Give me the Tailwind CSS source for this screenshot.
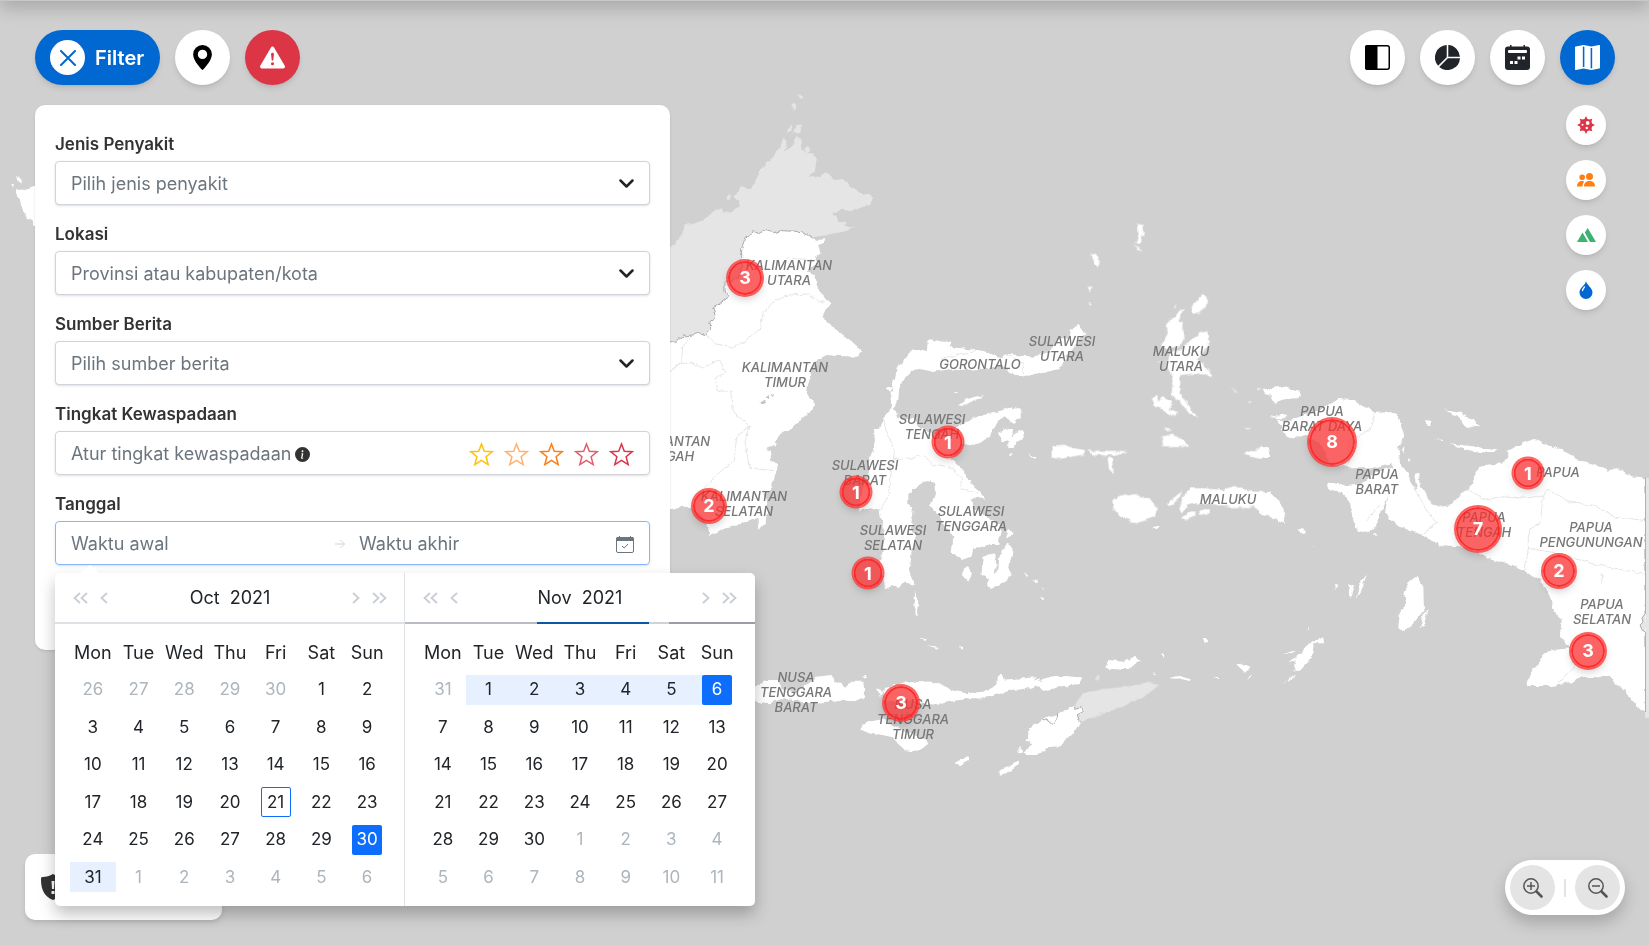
<!DOCTYPE html>
<html lang="id">
<head>
    <meta charset="UTF-8">
    <meta name="viewport" content="width=device-width, initial-scale=1.0">
    <title>Peta Kewaspadaan Penyakit</title>
    <script src="https://cdn.jsdelivr.net/npm/@tailwindcss/browser@4"></script>
</head>
<body class="relative min-h-screen overflow-hidden bg-[#d0d0d0] font-['Inter',sans-serif] text-[#212529]">

    <!-- Map -->
    <div id="map" class="absolute inset-0">
        <svg class="w-full h-full" viewBox="0 0 1649 946" preserveAspectRatio="none" aria-hidden="true">
            <defs>
                <filter id="coast" x="0" y="0" width="1649" height="946" filterUnits="userSpaceOnUse">
                    <feTurbulence type="fractalNoise" baseFrequency="0.14" numOctaves="3" seed="4" result="n"/>
                    <feDisplacementMap in="SourceGraphic" in2="n" scale="5" xChannelSelector="R" yChannelSelector="G"/>
                </filter>
            </defs>

            <path fill="#e5e5e5" d="M1645 478h4v240h-4z"/>
            <g filter="url(#coast)">
                <!-- Malaysia, Timor Leste -->
                <g fill="#e5e5e5">
                    <path transform="translate(650 80) scale(.3333)" d="M20 520L60 503L100 460L104 430L140 430L165 415L190 395L215 383L220 400L250 395L272 372L250 350L262 338L275 322L300 328L315 305L335 265L365 235L390 200L400 172L410 180L405 215L430 195L433 175L445 172L455 185L458 210L470 218L500 230L505 240L497 255L495 275L478 290L510 288L530 275L545 290L555 300L580 298L600 320L640 345L660 340L669 355L660 372L610 392L575 386L550 402L565 425L590 430L580 437L612 443L580 455L530 465L490 472L455 470L300 480L285 600L235 660L200 690L190 770L20 800Z M410 160L415 143L428 138L424 150Z M430 155L440 138L456 137L454 152L442 160Z M424 75L430 68L436 78L431 90Z M444 42L456 42L460 54L450 56Z M462 205L475 198L480 212L470 218Z M230 350L240 345L243 358L232 360Z"/>
                    <path transform="translate(1000 500) scale(.3333)" d="M225 618L245 580L310 567L380 560L440 547L478 555L430 592L395 605L385 615L340 630L280 650L240 668L215 650Z M287 540L300 527L296 545Z"/>
                </g>
                <g fill="#fff">
                    <path d="M17 188L25 190L37 186L45 230L35 225L27 217L22 207L20 200L17 197Z M11 182L14 184L13 187Z M17 177L21 179L23 184L19 182Z"/>
                    <!-- Kalimantan -->
                    <path transform="translate(650 80) scale(.3333)" d="M30 790L60 785L75 787L100 768L130 765L150 758L168 765L182 745L180 725L198 712L188 685L212 668L238 650L225 635L225 610L268 595L275 560L275 505L285 475L303 465L306 452L325 460L345 452L370 458L395 452L455 455L478 470L505 480L523 478L520 490L505 495L512 520L495 530L500 550L470 575L495 585L500 605L505 630L525 650L542 675L525 690L515 710L540 735L580 765L600 780L637 812L625 830L570 828L530 825L500 840L485 870L475 910L470 945L490 960L492 985L475 1000L460 1012L435 1040L405 1055L375 1078L380 1095L345 1108L365 1112L360 1145L382 1150L372 1200L360 1230L345 1240L355 1290L350 1325L328 1350L325 1310L290 1325L230 1345L178 1365L172 1330L130 1285L100 1280L65 1290L30 1290Z"/>
                    <!-- Sulawesi -->
                    <path transform="translate(650 80) scale(.3333)" d="M785 808L775 825L765 840L740 865L735 895L722 925L722 960L725 985L700 1015L690 1045L672 1050L675 1085L668 1110L655 1150L660 1180L640 1220L625 1295L660 1285L685 1290L692 1320L705 1350L700 1400L690 1460L700 1490L705 1525L725 1515L745 1528L765 1508L795 1515L780 1470L785 1410L800 1370L785 1350L790 1300L775 1270L775 1245L800 1220L830 1200L855 1205L858 1235L840 1275L860 1300L880 1330L910 1370L905 1420L940 1440L965 1430L970 1405L1015 1395L1045 1395L1055 1355L1045 1330L1000 1305L975 1280L960 1260L985 1250L1007 1260L980 1225L960 1210L940 1170L905 1140L925 1100L945 1090L980 1095L1020 1065L1045 1020L1065 1010L1090 1030L1112 1015L1112 990L1080 980L1045 995L1000 1005L960 1020L900 1050L850 1065L810 1045L790 1010L770 1018L745 1010L735 985L745 960L748 920L770 885L800 865L850 875L900 868L950 870L1060 860L1095 885L1140 887L1225 868L1250 830L1275 795L1307 765L1300 750L1285 735L1262 750L1260 770L1220 780L1200 815L1150 830L1100 825L1065 820L1050 835L1020 820L960 808L900 800L905 785L880 785L835 778L830 810L808 812Z M705 925L722 918L728 935L712 932Z"/>
                    <!-- Islands around Sulawesi, Nusa Tenggara -->
                    <path transform="translate(650 380) scale(.3333)" d="M998 530L1035 520L1040 560L1025 600L995 585Z M1072 488L1088 510L1078 560L1088 585L1050 615L1022 627L1010 605L1045 570L1048 530Z M940 570L955 560L965 585L955 605L940 590Z M1065 455L1080 445L1092 460L1075 472Z M1045 160L1065 145L1090 150L1085 170L1105 150L1122 155L1125 175L1100 185L1095 200L1075 205L1075 180L1055 185Z M925 75L950 58L995 46L990 55L965 65L935 78Z M795 635L805 660L800 710L793 690Z M912 34L920 32L923 40L914 42Z M1122 580L1134 586L1132 592Z M1145 598L1162 606L1158 610Z M1170 622L1182 630L1178 634Z M1170 650L1182 654L1180 663Z M812 770L830 776L826 784Z M832 796L866 800L864 806Z M930 798L942 802L936 810Z M1130 215L1160 236L1155 240Z M1090 218L1082 232L1076 228Z
                        M300 932L345 900L390 900L395 930L440 935L500 890L545 885L555 905L590 920L600 905L640 905L645 950L610 965L570 960L530 965L480 970L430 960L400 955L360 970L300 965Z M682 925L698 932L690 950Z M638 890L652 888L650 900Z M700 930L730 915L790 905L870 910L900 930L950 940L1000 935L1040 915L1040 890L1055 882L1065 905L1110 900L1130 910L1170 895L1165 915L1120 930L1085 930L1040 945L1000 955L950 955L900 965L860 975L800 965L750 965L700 960Z M1155 915L1190 890L1240 888L1300 893L1290 912L1230 918L1190 930Z M633 1045L650 1025L700 1018L760 1050L830 1080L835 1095L800 1115L765 1110L720 1070L650 1055Z M912 1150L955 1132L960 1142L930 1155Z M1048 1172L1080 1155L1110 1138L1110 1155L1070 1178L1050 1190Z"/>
                    <path transform="translate(1000 500) scale(.3333)" d="M225 618L195 630L175 645L125 657L90 685L80 720L95 735L70 755L80 765L110 765L140 745L175 742L215 705L240 670L230 645L250 640L250 622L232 628Z M50 760L65 740L65 758Z M115 550L155 535L180 528L245 533L240 550L180 560L140 572L115 560Z M0 540L110 532L95 550L60 572L0 572Z M315 507L325 480L370 485L405 467L425 485L390 498L385 508L330 503Z M480 465L494 462L490 474Z M605 418L620 416L622 426L612 430Z M712 496L745 492L748 508L735 518Z M508 535L530 526L572 538L570 543L540 536Z M638 533L658 534L656 539Z M742 535L754 524L750 534Z M880 512L890 470L935 425L970 412L972 430L942 430L935 475L900 512Z M850 462L885 452L880 460Z M868 482L888 472L886 484Z M845 548L885 524L880 534Z M922 392L934 374L930 386Z M460 82L482 76L470 88Z M895 88L914 102L910 86Z M457 516L465 520L461 525Z"/>
                    <!-- Maluku -->
                    <path transform="translate(1000 180) scale(.3333)" d="M555 385L530 400L500 435L503 460L487 490L490 505L530 505L550 480L550 430L535 425Z M575 380L610 340L622 355L618 380L600 400L580 402Z M560 490L600 460L625 450L628 480L615 510L590 540L610 555L640 588L590 580L540 585L542 640L560 670L595 715L570 703L540 665L515 645L518 590L500 560L510 520L540 510Z M455 650L470 645L475 668L492 650L515 665L510 690L535 700L520 710L490 690L465 680Z M485 770L515 762L550 780L568 800L490 802Z M337 960L360 950L410 945L450 955L470 985L465 1010L410 1030L360 1010L340 985Z M538 990L548 955L570 925L620 925L660 930L705 918L760 935L800 937L830 955L855 1000L850 1030L800 1005L760 980L710 985L640 970L570 970L545 1000Z M540 1015L580 990L585 1005L555 1020Z M595 991L627 991L625 1004L597 1004Z M500 970L545 935L540 950L510 975Z M272 218L285 222L300 248L292 258L280 240Z M412 133L427 140L431 160L418 192L406 190L416 165Z M402 195L425 215L412 210Z M266 320L278 320L272 336Z M268 366L278 370L268 373Z M733 820L805 798L808 825L780 838Z M790 635L850 622L900 638L895 655L860 655L820 670L812 648Z M808 712L860 704L850 715Z M155 800L190 797L258 812L255 822L180 837L155 832Z M265 812L385 813L340 825L280 825Z M322 832L335 835L342 882L328 868Z M688 615L714 640L706 636Z M730 744L758 744L740 748Z M492 745L515 750L500 755Z M520 378L530 378L524 385Z M476 540L486 545L480 548Z M772 624L780 622L776 630Z M745 664L753 666L748 670Z"/>
                    <!-- Papua -->
                    <path transform="translate(1260 380) scale(.3333)" d="M50 118L75 125L120 110L200 80L235 57L275 60L345 98L405 97L420 120L425 145L432 170L415 200L420 250L440 275L455 310L472 335L462 280L474 275L480 320L500 345L510 370L540 380L575 375L600 345L640 310L655 260L700 255L750 235L740 212L820 177L850 190L910 212L960 240L1045 272L1070 265L1125 293L1155 295L1155 1000L1142 990L1095 935L1045 887L990 895L965 885L940 905L900 915L870 918L800 918L815 875L850 825L880 810L930 805L910 780L900 760L905 720L880 690L875 655L840 600L795 575L740 550L690 535L620 500L540 495L480 460L430 445L400 425L375 395L385 350L355 415L345 445L292 457L270 370L245 335L205 330L200 308L235 308L255 318L290 315L320 300L340 285L375 268L400 262L395 250L340 262L265 262L210 250L185 195L140 165L85 178Z M555 88L600 95L660 135L620 145L590 110Z M495 120L510 122L512 134L500 138Z M565 190L650 200L715 212L680 218L620 210Z M526 178L550 179L548 183Z M0 200L25 205L28 230L0 238Z M5 30L60 20L120 32L118 50L80 52L45 72L30 45Z M28 108L80 104L60 115Z M470 590L490 620L492 690L460 730L430 757L415 745L420 690L440 670L430 640L450 600Z M505 690L495 735L480 745L492 700Z M265 615L282 612L275 655L268 650Z M320 583L304 635L290 655L305 605Z M0 340L30 335L68 375L72 430L30 410L0 400Z M340 458L354 468L346 470Z M445 235L452 240L446 248Z M425 205L434 200L430 220Z M112 445L135 455L128 462Z M158 498L162 500L160 505Z M225 612L235 614L228 628Z"/>
                </g>

                <!-- Borders -->
                <g fill="none" stroke="#d8d8d8" stroke-width="2">
                    <path transform="translate(650 80) scale(.3333)" d="M168 765L195 790L250 805L290 780L330 745L340 700L370 665L420 645L480 642L500 660L525 665M60 875L90 850L130 850L160 862L210 838L225 875L195 895L205 935L245 930L250 995L300 1040L285 1090L300 1165L372 1172M122 770L98 800L95 845L60 875M300 1040L262 1065L250 1140L190 1195L150 1240M410 535L500 540M700 1015L710 1060L735 1110L730 1135L720 1180L715 1250L690 1290M730 1135L785 1135L820 1125L850 1155L905 1165L938 1195L930 1225L985 1240M875 835L940 820L975 815M1065 820L1120 850L1120 880"/>
                    <path transform="translate(1260 380) scale(.3333)" d="M617 325L680 360L720 350L800 355L850 345L870 328L897 350L950 370L1000 375L1060 408L1155 422M850 345L840 430L805 450L805 505L795 575M805 505L900 520L990 550L1155 583M345 98L330 150L270 180L265 250M455 310L500 390L530 430L480 465M930 805L945 860L895 912M1024 580V610M360 375L320 420"/>
                </g>
                <g fill="none" stroke="#999" stroke-width="2.4">
                    <path transform="translate(650 80) scale(.3333)" d="M60 785L75 787L100 768L130 765L150 758L168 765L182 745L180 725L198 712L188 685L212 668L238 650L225 635L225 610L268 595L275 560L275 505L285 475L303 465L306 452L325 460L345 452L370 458L395 452L455 455L490 475"/>
                    <path transform="translate(1000 500) scale(.3333)" d="M224 618L226 628L245 620L250 635L230 645L240 668M125 657L140 660L155 672L172 655L173 640"/>
                </g>
                <path fill="#c4c4c4" d="M760 402l4-2 1 3-3 1zM766 398l3-2v4zM770 395l4-2-1 3z"/>
            </g>
            <path fill="none" stroke="#b0b0b0" d="M1645.500 478V613"/>
            <path fill="#e5e5e5" stroke="#999" stroke-width=".8" d="M1645.500 613L1642 618L1643 622L1640 625L1642 630L1645.500 632"/>
            <path fill="none" stroke="#b0b0b0" d="M1645.500 632V712"/>
        </svg>
    </div>

    <!-- Navbar bottom edge and its shadow -->
    <div class="absolute -top-14 inset-x-0 h-[57px] bg-[#c8c8c8] shadow-[0_8px_16px_rgba(0,0,0,0.18)]"></div>

    <!-- Info card -->
    <div class="absolute left-[25px] bottom-[26px] flex items-center w-[197px] h-[66px] px-4 bg-white rounded-[10px] shadow-md">
        <svg class="w-6 h-[26px]" viewBox="0 0 24 26" fill="#333" aria-hidden="true">
            <path d="M12 0C9 2 5 3 1.500 3C0 3 0 4 0 6C0 16 4 23 12 26C20 23 24 16 24 6C24 4 24 3 22.500 3C19 3 15 2 12 0Z"/>
            <path fill="#fff" d="M10.500 7h3l-.5 8h-2zM10.500 17h3v3h-3z"/>
        </svg>
    </div>

    <!-- Top buttons -->
    <header class="relative flex justify-between pl-[35px] pr-[34px] pt-[30px]">
        <div class="flex gap-[15px]">
            <button type="button" class="flex items-center gap-[10px] h-[55px] pl-[15px] pr-4 rounded-full bg-[#0068d0] text-white text-xl font-semibold shadow-md">
                <span class="flex items-center justify-center size-[35px] rounded-full bg-white">
                    <svg class="size-4" viewBox="0 0 16 16" fill="none" stroke="#0068d0" stroke-width="2" stroke-linecap="round"><path d="M1 1L15 15M15 1L1 15"/></svg>
                </span>
                Filter
            </button>
            <button type="button" aria-label="Lokasi" class="flex items-center justify-center size-[55px] rounded-full bg-white text-black shadow-md">
                <svg class="size-[25px]" viewBox="0 0 16 16" fill="currentColor"><path d="M8 16s6-5.686 6-10A6 6 0 0 0 2 6c0 4.314 6 10 6 10m0-7a3 3 0 1 1 0-6 3 3 0 0 1 0 6"/></svg>
            </button>
            <button type="button" aria-label="Peringatan" class="flex items-center justify-center size-[55px] rounded-full bg-[#dc3545] text-white shadow-md">
                <svg class="size-[25px]" viewBox="0 0 16 16" fill="currentColor"><path d="M8.982 1.566a1.13 1.13 0 0 0-1.96 0L.165 13.233c-.457.778.091 1.767.98 1.767h13.713c.889 0 1.438-.99.98-1.767zM8 5c.535 0 .954.462.9.995l-.35 3.507a.552.552 0 0 1-1.1 0L7.100 5.995A.905.905 0 0 1 8 5m.002 6a1 1 0 1 1 0 2 1 1 0 0 1 0-2"/></svg>
            </button>
        </div>
        <div class="flex gap-[15px]">
            <button type="button" aria-label="Panel" class="flex items-center justify-center size-[55px] rounded-full bg-white text-black shadow-md">
                <svg class="size-[25px]" viewBox="0 0 25 25"><rect x=".75" y=".75" width="23.500" height="23.500" rx="2" fill="none" stroke="currentColor" stroke-width="1.500"/><path fill="currentColor" d="M2 0h10.500v25H2a2 2 0 0 1-2-2V2a2 2 0 0 1 2-2z"/></svg>
            </button>
            <button type="button" aria-label="Statistik" class="flex items-center justify-center size-[55px] rounded-full bg-white text-[#212529] shadow-md">
                <svg class="size-[25px]" viewBox="0 0 16 16" fill="currentColor"><path d="M15.985 8.500H8.207l-5.500 5.500a8 8 0 0 0 13.277-5.500zM2 13.292A8 8 0 0 1 7.500.015v7.778zM8.500.015V7.500h7.485A8 8 0 0 0 8.500.015"/></svg>
            </button>
            <button type="button" aria-label="Kalender" class="flex items-center justify-center size-[55px] rounded-full bg-white text-[#212529] shadow-md">
                <svg class="size-[25px]" viewBox="0 0 25 25"><rect y="1.500" width="25" height="23.500" rx="3" fill="currentColor"/><path fill="currentColor" d="M5 0h1.500v3H5zM18.500 0H20v3h-1.500z"/><path fill="#fff" d="M4 5h17a1 1 0 0 1 1 1v1a1 1 0 0 1-1 1H4a1 1 0 0 1-1-1V6a1 1 0 0 1 1-1zM12.500 11.500h3v3h-3zM17 11.500h3v3h-3zM5 16h3v3H5zM9.500 16h3v3h-3z"/></svg>
            </button>
            <button type="button" aria-label="Peta" class="flex items-center justify-center size-[55px] rounded-full bg-[#0068d0] text-white shadow-md">
                <svg class="size-[25px]" viewBox="0 0 16 16" fill="currentColor" fill-rule="evenodd"><path d="M16 .5a.5.5 0 0 0-.598-.49L10.500.99 5.598.01a.5.5 0 0 0-.196 0l-5 1A.5.5 0 0 0 0 1.500v14a.5.5 0 0 0 .598.49l4.902-.98 4.902.98a.5.5 0 0 0 .196 0l5-1A.5.5 0 0 0 16 14.500zM5 14.090V1.110l.5-.1.5.1v12.980l-.402-.08a.5.5 0 0 0-.196 0zm5 .8V1.910l.402.08a.5.5 0 0 0 .196 0L11 1.910v12.980l-.5.1z"/></svg>
            </button>
        </div>
    </header>

    <main class="relative flex items-start justify-between px-[35px] pt-5">
        <!-- Filter panel -->
        <form class="flex flex-col gap-[17px] w-[635px] px-5 pt-[27px] pb-[85px] bg-white rounded-[10px] shadow-sm">
            <div>
                <label for="jenis" class="block mb-[5px] text-[17px] leading-6 font-semibold text-[#333]">Jenis Penyakit</label>
                <div class="relative">
                    <select id="jenis" class="appearance-none block w-full h-11 px-[15px] pt-0.5 rounded border border-[#ced4da] bg-white text-lg text-[#6c757d] shadow-sm">
                        <option>Pilih jenis penyakit</option>
                    </select>
                    <svg class="absolute right-4 top-[18px] w-[15px] h-[9px] pointer-events-none" viewBox="0 0 15 9" fill="none" stroke="#212529" stroke-width="2.500" stroke-linecap="round" stroke-linejoin="round"><path d="M1.500 1.500L7.500 7.500L13.500 1.500"/></svg>
                </div>
            </div>
            <div>
                <label for="lokasi" class="block mb-[5px] text-[17px] leading-6 font-semibold text-[#333]">Lokasi</label>
                <div class="relative">
                    <select id="lokasi" class="appearance-none block w-full h-11 px-[15px] pt-0.5 rounded border border-[#ced4da] bg-white text-lg text-[#6c757d] shadow-sm">
                        <option>Provinsi atau kabupaten/kota</option>
                    </select>
                    <svg class="absolute right-4 top-[18px] w-[15px] h-[9px] pointer-events-none" viewBox="0 0 15 9" fill="none" stroke="#212529" stroke-width="2.500" stroke-linecap="round" stroke-linejoin="round"><path d="M1.500 1.500L7.500 7.500L13.500 1.500"/></svg>
                </div>
            </div>
            <div>
                <label for="sumber" class="block mb-[5px] text-[17px] leading-6 font-semibold text-[#333]">Sumber Berita</label>
                <div class="relative">
                    <select id="sumber" class="appearance-none block w-full h-11 px-[15px] pt-0.5 rounded border border-[#ced4da] bg-white text-lg text-[#6c757d] shadow-sm">
                        <option>Pilih sumber berita</option>
                    </select>
                    <svg class="absolute right-4 top-[18px] w-[15px] h-[9px] pointer-events-none" viewBox="0 0 15 9" fill="none" stroke="#212529" stroke-width="2.500" stroke-linecap="round" stroke-linejoin="round"><path d="M1.500 1.500L7.500 7.500L13.500 1.500"/></svg>
                </div>
            </div>
            <div role="group" aria-labelledby="tingkat">
                <div id="tingkat" class="mb-[5px] text-[17px] leading-6 font-semibold text-[#333]">Tingkat Kewaspadaan</div>
                <div class="flex items-center h-11 px-[15px] pt-0.5 rounded border border-[#ced4da] text-lg text-[#6c757d] shadow-sm">
                    Atur tingkat kewaspadaan
                    <svg class="ml-1 size-[15px]" viewBox="0 0 16 16" fill="#333" aria-hidden="true"><path d="M8 16A8 8 0 1 0 8 0a8 8 0 0 0 0 16m.93-9.412-1 4.705c-.07.34.029.533.304.533.194 0 .487-.07.686-.246l-.088.416c-.287.346-.92.598-1.465.598-.703 0-1.002-.422-.808-1.319l.738-3.468c.064-.293.006-.399-.287-.47l-.451-.081.082-.381 2.290-.287zM8 5.500a1 1 0 1 1 0-2 1 1 0 0 1 0 2"/></svg>
                    <div id="stars" class="flex gap-[10px] ml-auto"></div>
                </div>
            </div>
            <div>
                <label for="awal" class="block mb-[5px] text-[17px] leading-6 font-semibold text-[#333]">Tanggal</label>
                <div class="relative">
                    <div class="flex items-center h-11 px-[15px] pt-0.5 rounded border border-[#86b7fe] text-lg shadow-sm">
                        <input id="awal" type="text" placeholder="Waktu awal" class="shrink-0 w-[264px] placeholder:text-[#6c757d] outline-none">
                        <svg class="shrink-0 mr-[14px] size-[10px]" viewBox="0 0 10 10" fill="none" stroke="#ced4da" aria-hidden="true"><path d="M0 5H9.500M5.500 1L9.500 5L5.500 9"/></svg>
                        <input type="text" aria-label="Waktu akhir" placeholder="Waktu akhir" class="flex-1 min-w-0 placeholder:text-[#6c757d] outline-none">
                        <svg class="shrink-0 w-[18px] h-[17px]" viewBox="0 0 18 17" fill="none" stroke="#6c757d" aria-hidden="true"><rect x=".5" y="1.500" width="17" height="15" rx="1.500"/><path fill="#6c757d" stroke="none" d="M0 5V3a2 2 0 0 1 2-2h1V0h1v1h10V0h1v1h1a2 2 0 0 1 2 2v2z"/><path d="M6 10L8.200 12L12 8"/></svg>
                    </div>

                    <!-- Date range popover -->
                    <div class="absolute z-10 top-[52px] left-0 w-[700px] bg-white rounded-[5px] shadow-[0_8px_16px_rgba(0,0,0,0.25)]">
                        <svg class="absolute -top-2 left-[26px] w-[18px] h-2" viewBox="0 0 18 8" fill="#fff" aria-hidden="true"><path d="M0 8L9 0L18 8z"/></svg>
                        <div id="calendars" class="grid grid-cols-2"></div>
                    </div>
                </div>
            </div>
        </form>

        <!-- Layer buttons -->
        <div class="flex flex-col gap-[15px] pr-2">
            <button type="button" aria-label="Penyakit" class="flex items-center justify-center size-10 rounded-full bg-white shadow-md">
                <svg class="size-[18px]" viewBox="0 0 18 18" fill="#dc3545"><path d="M9 0L10.500 3L12.500 3.500L15.300 2.700L14.500 5.500L15 7.500L18 9L15 10.500L14.500 12.500L15.300 15.300L12.500 14.500L10.500 15L9 18L7.500 15L5.500 14.500L2.700 15.300L3.500 12.500L3 10.500L0 9L3 7.500L3.500 5.500L2.700 2.700L5.500 3.500L7.500 3Z"/><circle cx="10.700" cy="7" r="1.900" fill="#fff"/><circle cx="5.500" cy="8.800" r="1" fill="#fff"/><circle cx="9.800" cy="12" r="1.200" fill="#fff"/></svg>
            </button>
            <button type="button" aria-label="Penduduk" class="flex items-center justify-center size-10 rounded-full bg-white shadow-md">
                <svg class="w-[18px] h-[14px]" viewBox="0 0 18 14" fill="#fd7e14"><circle cx="12.500" cy="3.500" r="3.500"/><circle cx="5.200" cy="4.200" r="2.800"/><path d="M7 13.500C7 9.500 9.500 8 12.500 8S18 9.500 18 13.500zM0 13.500C0 9.500 2.500 8 5.200 8C6 8 6.800 8.200 7.300 8.500C6 10 5.600 11.500 5.600 13.500z"/></svg>
            </button>
            <button type="button" aria-label="Lingkungan" class="flex items-center justify-center size-10 rounded-full bg-white shadow-md">
                <svg class="w-[19px] h-[14px]" viewBox="0 0 19 14" fill="#3cb371"><path d="M5.500 4.500L11 14H0zM7.800 4.500L10.700 0L19 14H13z"/></svg>
            </button>
            <button type="button" aria-label="Air" class="flex items-center justify-center size-10 rounded-full bg-white shadow-md">
                <svg class="w-[14px] h-[18px]" viewBox="0 0 14 18"><path fill="#0068d0" d="M7 0C7.500 4 13.500 6.500 13.500 11.500A6.500 6.500 0 0 1 .5 11.500C.5 6.500 6.500 4.500 7 0Z"/><path d="M3.500 9.500Q4 7.500 5.500 6" fill="none" stroke="#fff" stroke-width="1.300" stroke-linecap="round"/></svg>
            </button>
        </div>
    </main>

    <!-- Zoom -->
    <div class="absolute right-6 bottom-[31px] flex items-center gap-[9px] p-[5px] rounded-full bg-white shadow-[0_8px_16px_rgba(0,0,0,0.2)]">
        <button type="button" aria-label="Perbesar" class="flex items-center justify-center size-[45px] rounded-full bg-[#e4e4e4]">
            <svg class="size-5" viewBox="0 0 20 20" fill="none" stroke="#555" stroke-width="1.500"><circle cx="8" cy="8" r="7.200"/><path d="M4 8H12M8 4V12"/><path stroke-width="2.600" stroke-linecap="round" d="M13.500 13.500L18.500 18.500"/></svg>
        </button>
        <span class="w-[2px] h-[18px] bg-[#e4e4e4]"></span>
        <button type="button" aria-label="Perkecil" class="flex items-center justify-center size-[45px] rounded-full bg-[#e4e4e4]">
            <svg class="size-5" viewBox="0 0 20 20" fill="none" stroke="#555" stroke-width="1.500"><circle cx="8" cy="8" r="7.200"/><path d="M4 8H12"/><path stroke-width="2.600" stroke-linecap="round" d="M13.500 13.500L18.500 18.500"/></svg>
        </button>
    </div>

    <script>
        const mapWidth = 1649;
        const mapHeight = 946;

        const provinces = [
            ["KALIMANTAN\nUTARA", 789, 273], ["KALIMANTAN\nTIMUR", 785, 375], ["KALIMANTAN\nTENGAH", 667, 449],
            ["KALIMANTAN\nSELATAN", 744, 504], ["SULAWESI\nTENGAH", 932, 427], ["SULAWESI\nBARAT", 865, 473],
            ["SULAWESI\nSELATAN", 893, 538], ["SULAWESI\nTENGGARA", 971, 519], ["NUSA\nTENGGARA\nBARAT", 796, 692],
            ["NUSA\nTENGGARA\nTIMUR", 913, 719], ["GORONTALO", 980, 364], ["SULAWESI\nUTARA", 1062, 349],
            ["MALUKU\nUTARA", 1181, 359], ["MALUKU", 1228, 499], ["PAPUA\nBARAT DAYA", 1322, 419],
            ["PAPUA\nBARAT", 1377, 482], ["PAPUA\nTENGAH", 1484, 525], ["PAPUA", 1558, 472],
            ["PAPUA\nPENGUNUNGAN", 1591, 535], ["PAPUA\nSELATAN", 1602, 612]
        ];

        // count, x, y, diameter
        const clusters = [
            [3, 745, 278, 34], [2, 709, 506, 32], [1, 948, 442, 29], [1, 856, 492, 29], [1, 868, 573, 29], [3, 901, 703, 34],
            [8, 1332, 442, 46], [1, 1528, 473, 29], [7, 1478, 529, 44], [2, 1559, 571, 32], [3, 1588, 651, 34]
        ];

        const map = document.getElementById("map");

        provinces.forEach(([name, x, y]) => {
            const el = document.createElement("div");
            el.className = "absolute -translate-x-1/2 -translate-y-1/2 whitespace-pre text-center text-[13px] leading-[15px] font-medium italic text-[#777]";
            el.style.left = (x / mapWidth * 100) + "%";
            el.style.top = (y / mapHeight * 100) + "%";
            el.textContent = name;
            map.appendChild(el);
        });

        clusters.forEach(([count, x, y, size]) => {
            const el = document.createElement("button");
            el.type = "button";
            el.className = "absolute -translate-x-1/2 -translate-y-1/2 rounded-full border-2 border-[#ff2020]/80 bg-[#fa3030]/75 text-lg leading-none font-bold text-white shadow-[0_0_0_2px_rgba(250,60,60,0.8),0_4px_8px_rgba(0,0,0,0.2)]";
            el.style.left = (x / mapWidth * 100) + "%";
            el.style.top = (y / mapHeight * 100) + "%";
            el.style.width = size + "px";
            el.style.height = size + "px";
            el.textContent = count;
            map.appendChild(el);
        });

        document.getElementById("stars").innerHTML = ["#ffc107", "#feb272", "#fd7e14", "#e35d6a", "#dc3545"].map((color, i) => `
            <button type="button" aria-label="Tingkat ${i + 1}">
                <svg class="size-[25px]" viewBox="0 0 25 25" fill="none" stroke="${color}" stroke-width="1.500"><path d="M12.500 2L15.300 9.300L23.300 9.700L17.100 14.700L19.200 22.600L12.500 18.300L5.800 22.600L7.900 14.700L1.700 9.700L9.700 9.300Z"/></svg>
            </button>`).join("");

        const weekdays = ["Mon", "Tue", "Wed", "Thu", "Fri", "Sat", "Sun"];
        const months = [
            { name: "Oct", lead: [26, 27, 28, 29, 30], days: 31, today: 21, start: 30, range: [31] },
            { name: "Nov", lead: [31], days: 30, end: 6, range: [1, 2, 3, 4, 5] }
        ];

        const arrow = (label, points, width) => `
            <button type="button" aria-label="${label}"><svg width="${width}" height="12" viewBox="0 0 ${width} 12" fill="none" stroke="#c8ced4" stroke-width="1.800"><path d="${points}"/></svg></button>`;

        function dayCell(m, day, inMonth) {
            let cell = "p-0";
            let box = "block mx-auto size-[30px]";
            if (!inMonth) {
                box += " text-[#adb5bd]";
            } else if (m.range.includes(day)) {
                box = "block w-full h-[30px] bg-[#e6f0ff]";
            } else if (day === m.today) {
                box += " rounded-[2px] border border-[#0d6efd]";
            } else if (day === m.start || day === m.end) {
                box += " rounded-[2px] bg-[#0d6efd] text-white";
                if (day === m.end) cell += " bg-[linear-gradient(#e6f0ff,#e6f0ff)] bg-[length:50%_30px] bg-[position:left_center] bg-no-repeat";
            }
            return `<td class="${cell}"><button type="button" class="${box}">${day}</button></td>`;
        }

        document.getElementById("calendars").innerHTML = months.map((m, i) => {
            const cells = m.lead.map(d => dayCell(m, d, false));
            for (let d = 1; d <= m.days; d++) cells.push(dayCell(m, d, true));
            for (let d = 1; cells.length < 42; d++) cells.push(dayCell(m, d, false));
            const rows = [];
            for (let r = 0; r < 6; r++) rows.push(`<tr class="h-[37px]">` + cells.slice(r * 7, r * 7 + 7).join("") + "</tr>");

            const line = i === 0
                ? `<div class="h-[2px] bg-[#dee2e6]"></div>`
                : `<div class="flex h-[2px]"><span class="w-[132px] bg-[#b9bcc2]"></span><span class="w-[112px] bg-[#0a58a5]"></span><span class="w-5 bg-[#cfd2d6]"></span><span class="flex-1 bg-[#9c9ea6]"></span></div>`;

            return `
                <section class="${i === 0 ? "" : "shadow-[-1px_0_0_#dee2e6]"}">
                    <div class="flex items-center justify-between h-[49px] px-[18px]">
                        <div class="flex items-center gap-3">
                            ${arrow("Tahun sebelumnya", "M7 1L1.500 6L7 11M14 1L8.500 6L14 11", 15)}
                            ${arrow("Bulan sebelumnya", "M7 1L1.500 6L7 11", 8)}
                        </div>
                        <div class="text-lg">${m.name}&nbsp; 2021</div>
                        <div class="flex items-center gap-3">
                            ${arrow("Bulan berikutnya", "M1 1L6.500 6L1 11", 8)}
                            ${arrow("Tahun berikutnya", "M1 1L6.500 6L1 11M8 1L13.500 6L8 11", 15)}
                        </div>
                    </div>
                    ${line}
                    <div class="px-[15px] pt-[10px] pb-[10px]">
                        <table class="w-full h-[262px] table-fixed text-center text-[17px]">
                            <thead><tr class="h-[37px]">${weekdays.map(d => `<th class="p-0 text-lg font-normal">${d}</th>`).join("")}</tr></thead>
                            <tbody>${rows.join("")}</tbody>
                        </table>
                    </div>
                </section>`;
        }).join("");
    </script>
</body>
</html>
